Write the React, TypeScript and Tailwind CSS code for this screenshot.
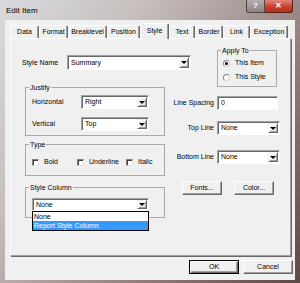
import React from "react";

type Tab = { label: string; w: string; sel?: boolean };

const tabs: Tab[] = [
  { label: "Data", w: "w-[29px]" },
  { label: "Format", w: "w-[29px]" },
  { label: "Breaklevel", w: "w-[39px]" },
  { label: "Position", w: "w-[33px]" },
  { label: "Style", w: "w-[29px]", sel: true },
  { label: "Text", w: "w-[26px]" },
  { label: "Border", w: "w-[28px]" },
  { label: "Link", w: "w-[27px]" },
  { label: "Exception", w: "w-[38px]" },
];

function Arrow() {
  return (
    <div className="w-[10px] shrink-0 flex items-center justify-center bg-[#f0f0f0] border border-t-[#f0f0f0] border-l-[#f0f0f0] border-r-[#696969] border-b-[#696969] shadow-[inset_1px_1px_0_#ffffff,inset_-1px_-1px_0_#a0a0a0]">
      <div className="w-0 h-0 border-l-[3px] border-r-[3px] border-t-[3px] border-l-transparent border-r-transparent border-t-black" />
    </div>
  );
}

function Combo({ cls, value }: { cls: string; value: string }) {
  return (
    <div
      className={`${cls} flex bg-white border border-t-[#a0a0a0] border-l-[#a0a0a0] border-r-white border-b-white shadow-[inset_1px_1px_0_#696969] p-[1px]`}
    >
      <span className="flex-1 self-center pl-[2px] whitespace-nowrap">{value}</span>
      <Arrow />
    </div>
  );
}

function Input({ cls, value }: { cls: string; value: string }) {
  return (
    <div
      className={`${cls} flex items-center bg-white border border-t-[#a0a0a0] border-l-[#a0a0a0] border-r-white border-b-white shadow-[inset_1px_1px_0_#696969] pl-[3px]`}
    >
      {value}
    </div>
  );
}

function Btn({ cls, label, def }: { cls: string; label: string; def?: boolean }) {
  return def ? (
    <div
      className={`${cls} flex items-center justify-center bg-[#f0f0f0] border border-black shadow-[inset_1px_1px_0_#ffffff,inset_-1px_-1px_0_#696969,inset_-2px_-2px_0_#a0a0a0]`}
    >
      {label}
    </div>
  ) : (
    <div
      className={`${cls} flex items-center justify-center bg-[#f0f0f0] border border-t-white border-l-white border-r-[#696969] border-b-[#696969] shadow-[inset_-1px_-1px_0_#a0a0a0]`}
    >
      {label}
    </div>
  );
}

function Radio({ checked, label }: { checked?: boolean; label: string }) {
  return (
    <div className="h-[10px] flex items-center gap-[5px]">
      <div className="w-[7px] h-[7px] rounded-full bg-white border border-t-[#808080] border-l-[#808080] border-r-[#d4d4d4] border-b-[#d4d4d4] flex items-center justify-center">
        {checked && <div className="w-[3px] h-[3px] rounded-full bg-black" />}
      </div>
      <span className="whitespace-nowrap">{label}</span>
    </div>
  );
}

function Check({ cls, label }: { cls: string; label: string }) {
  return (
    <div className={`${cls} h-[10px] flex items-center gap-[5px]`}>
      <div className="w-[7px] h-[7px] bg-white border border-t-[#808080] border-l-[#808080] border-r-[#e3e3e3] border-b-[#e3e3e3] shadow-[inset_1px_1px_0_#404040]" />
      <span className="whitespace-nowrap">{label}</span>
    </div>
  );
}

function Row({ label, cls, children }: { label: string; cls: string; children: React.ReactNode }) {
  return (
    <div className={`${cls} flex items-center`}>
      <span className="w-[52px] text-right pr-[3px] whitespace-nowrap">{label}</span>
      {children}
    </div>
  );
}

export default function App() {
  return (
    <div className="w-[300px] h-[283px] flex flex-col bg-[linear-gradient(125deg,#d9dbde_0%,#c6bebc_30%,#a39391_55%,#7d6a67_80%,#5c4a47_100%)] font-['Liberation_Sans',Arial,sans-serif] text-black">
      {/* title bar */}
      <div className="h-[20px] shrink-0 flex items-start">
        <div className="ml-[6px] mt-[6px] text-[8px] leading-[10px]">Edit Item</div>
        <div className="ml-auto mr-[7px] flex">
          <div className="w-[19px] h-[13px] flex items-center justify-center rounded-bl-[3px] border border-t-0 border-[#4e4644] bg-[linear-gradient(#b4b0af,#8a8483)] text-white text-[8px] font-bold leading-[10px]">
            ?
          </div>
          <div className="w-[28px] h-[13px] flex items-center justify-center rounded-br-[3px] border border-t-0 border-l-0 border-[#5b1d16] bg-[linear-gradient(#e2877a,#c8402f_55%,#b5301f)] text-white text-[8px] font-bold leading-[10px]">
            ✕
          </div>
        </div>
      </div>

      {/* client */}
      <div className="mx-[5px] h-[260px] bg-[#f0f0f0] flex flex-col text-[7px] leading-[8px]">
        {/* tabs */}
        <div className="mt-[3px] ml-[5px] h-[15px] flex items-end">
          {tabs.map((t) =>
            t.sel ? (
              <div
                key={t.label}
                className={`${t.w} h-[16px] -mb-[1px] relative z-10 flex items-center justify-center pb-[2px] bg-[#f0f0f0] border-l border-t border-white border-r border-r-[#696969] rounded-t-[2px] shadow-[inset_-1px_0_0_#a0a0a0]`}
              >
                {t.label}
              </div>
            ) : (
              <div
                key={t.label}
                className={`${t.w} h-[13px] flex items-center justify-center border-l border-t border-white border-r border-r-[#696969] rounded-t-[2px] shadow-[inset_-1px_0_0_#a0a0a0]`}
              >
                {t.label}
              </div>
            )
          )}
        </div>

        {/* panel */}
        <div className="ml-[5px] w-[281px] h-[218px] shrink-0 border border-t-white border-l-white border-r-[#a0a0a0] border-b-[#a0a0a0] shadow-[1px_1px_0_#696969] flex flex-col pl-[11px] pt-[7px]">
          <div className="flex items-start">
            <div className="mt-[9px] flex items-center h-[15px]">
              <span className="w-[45px] whitespace-nowrap">Style Name</span>
              <Combo cls="w-[124px] h-[15px]" value="Summary" />
            </div>
            <fieldset className="ml-[26px] w-[60px] border border-[#a9a9a9]">
              <legend className="ml-[3px] px-[1px] leading-[9px]">Apply To</legend>
              <div className="pl-[5px] pt-[3px] pb-[4px] flex flex-col gap-[4px]">
                <Radio checked label="This Item" />
                <Radio label="This Style" />
              </div>
            </fieldset>
          </div>

          <div className="flex items-start">
            {/* left column */}
            <div className="ml-[3px] -mt-[4px] w-[140px] flex flex-col">
              <fieldset className="border border-[#a9a9a9]">
                <legend className="ml-[3px] px-[1px] leading-[9px]">Justify</legend>
                <div className="pl-[6px] pt-[3px] pb-[4px] flex flex-col gap-[8px]">
                  <div className="flex items-center">
                    <span className="w-[49px]">Horizontal</span>
                    <Combo cls="w-[68px] h-[14px]" value="Right" />
                  </div>
                  <div className="flex items-center">
                    <span className="w-[49px]">Vertical</span>
                    <Combo cls="w-[68px] h-[14px]" value="Top" />
                  </div>
                </div>
              </fieldset>

              <fieldset className="mt-[4px] border border-[#a9a9a9]">
                <legend className="ml-[3px] px-[1px] leading-[9px]">Type</legend>
                <div className="pl-[6px] pt-[8px] pb-[8px] flex">
                  <Check cls="w-[45px]" label="Bold" />
                  <Check cls="w-[49px]" label="Underline" />
                  <Check cls="" label="Italic" />
                </div>
              </fieldset>

              <fieldset className="mt-[7px] border border-[#a9a9a9]">
                <legend className="ml-[3px] px-[1px] leading-[9px]">Style Column</legend>
                <div className="pl-[6px] pt-[6px] pb-[6px]">
                  <div className="relative w-[117px]">
                    <Combo cls="w-[117px] h-[13px]" value="None" />
                    <div className="absolute left-0 top-full w-full bg-white border border-black z-10">
                      <div className="h-[9px] leading-[9px] pl-[1px]">None</div>
                      <div className="h-[9px] leading-[9px] pl-[1px] bg-[#3399ff] text-white">
                        Report Style Column
                      </div>
                    </div>
                  </div>
                </div>
              </fieldset>
            </div>

            {/* right column */}
            <div className="flex flex-col">
              <Row label="Line Spacing" cls="mt-[9px]">
                <Input cls="w-[61px] h-[14px]" value="0" />
              </Row>
              <Row label="Top Line" cls="mt-[11px]">
                <Combo cls="w-[63px] h-[14px]" value="None" />
              </Row>
              <Row label="Bottom Line" cls="mt-[15px]">
                <Combo cls="w-[63px] h-[14px]" value="None" />
              </Row>
              <div className="mt-[17px] ml-[17px] flex gap-[12px]">
                <Btn cls="w-[40px] h-[14px]" label="Fonts..." />
                <Btn cls="w-[40px] h-[14px]" label="Color..." />
              </div>
            </div>
          </div>
        </div>

        {/* bottom buttons */}
        <div className="mt-[4px] pr-[2px] flex justify-end gap-[4px]">
          <Btn cls="w-[50px] h-[14px]" label="OK" def />
          <Btn cls="w-[50px] h-[14px]" label="Cancel" />
        </div>
      </div>
    </div>
  );
}
